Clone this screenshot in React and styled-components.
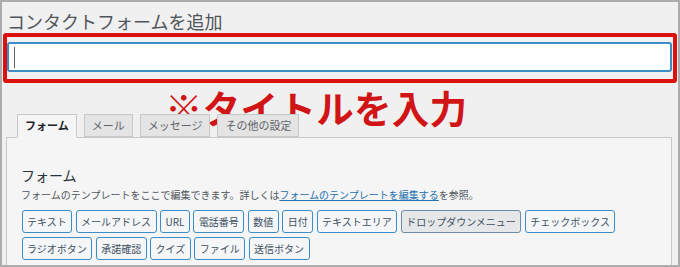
import React from "react";
import styled, { createGlobalStyle } from "styled-components";

const GlobalStyle = createGlobalStyle`
  body {
    margin: 0;
    background: #ffffff;
    font-family: "Noto Sans CJK JP", "Noto Sans", sans-serif;
  }
`;

const Frame = styled.div`
  position: relative;
  box-sizing: border-box;
  width: 680px;
  height: 267px;
  overflow: hidden;
  border: 2px solid #acacac;
  background: #f0f0f0;
  padding: 8px 0 0 0;
`;

const Title = styled.h1`
  margin: 0 0 10px 5px;
  font-size: 18px;
  line-height: 22px;
  font-weight: 400;
  color: #50555b;
`;

const TitleField = styled.div`
  box-sizing: border-box;
  display: flex;
  align-items: center;
  margin-left: 5px;
  width: 665px;
  height: 30px;
  padding-left: 5px;
  border: 2px solid #3b8dc5;
  border-radius: 3px;
  background: #ffffff;
`;

const Caret = styled.span`
  width: 1px;
  height: 21px;
  background: #666;
`;

const Highlight = styled.div`
  position: absolute;
  box-sizing: border-box;
  left: 1px;
  top: 31px;
  width: 674px;
  height: 50px;
  border: 4px solid #dd1010;
  border-radius: 3px;
  pointer-events: none;
`;

const Note = styled.div`
  position: absolute;
  left: 163px;
  top: 86px;
  font-size: 37.5px;
  line-height: 37px;
  letter-spacing: 0.3px;
  font-weight: 700;
  color: #d11416;
  white-space: nowrap;
`;

const Tabs = styled.div`
  display: flex;
  gap: 7px;
  margin: 42px 0 0 15px;
  position: relative;
  z-index: 1;
`;

const Tab = styled.div`
  box-sizing: border-box;
  height: ${({ $active }) => ($active ? "24px" : "23px")};
  padding: 0 7px;
  border: 1px solid #c8c8c8;
  border-bottom-color: ${({ $active }) => ($active ? "#f5f5f5" : "#c8c8c8")};
  background: ${({ $active }) => ($active ? "#f5f5f5" : "#e4e4e4")};
  color: ${({ $active }) => ($active ? "#1d2327" : "#5f6368")};
  font-size: 11px;
  line-height: 21px;
  font-weight: ${({ $active }) => ($active ? 700 : 400)};
  margin-bottom: ${({ $active }) => ($active ? "-1px" : "0")};
`;

const Panel = styled.div`
  box-sizing: border-box;
  margin-left: 4px;
  width: 666px;
  height: 140px;
  padding: 28px 14px 0 14px;
  border: 1px solid #c8c8c8;
  background: #f5f5f5;
`;

const PanelHeading = styled.h2`
  margin: 0 0 4px 0;
  font-size: 14px;
  line-height: 18px;
  font-weight: 400;
  color: #2c3338;
`;

const Description = styled.p`
  margin: 0 0 8px 0;
  font-size: 10px;
  line-height: 14px;
  color: #50575e;
`;

const Link = styled.a`
  color: #2271b1;
  text-decoration: underline;
`;

const ButtonRow = styled.div`
  display: flex;
  flex-wrap: wrap;
  column-gap: 3.4px;
  row-gap: 4px;
  margin-left: 0.5px;
`;

const TagButton = styled.span`
  box-sizing: border-box;
  height: 23px;
  padding: 0 4.5px;
  border: 1px solid ${({ $pressed }) => ($pressed ? "#6d8aa6" : "#3a8dc8")};
  border-radius: 3px;
  background: ${({ $pressed }) => ($pressed ? "#e6e7e8" : "#f4f6f7")};
  color: #3f5063;
  font-size: 10px;
  line-height: 21px;
  white-space: nowrap;
`;

const tabs = ["フォーム", "メール", "メッセージ", "その他の設定"];

const tags = [
  "テキスト",
  "メールアドレス",
  "URL",
  "電話番号",
  "数値",
  "日付",
  "テキストエリア",
  "ドロップダウンメニュー",
  "チェックボックス",
  "ラジオボタン",
  "承諾確認",
  "クイズ",
  "ファイル",
  "送信ボタン",
];

export default function App() {
  return (
    <>
      <GlobalStyle />
      <Frame>
        <Title>コンタクトフォームを追加</Title>
        <TitleField>
          <Caret />
        </TitleField>
        <Tabs>
          {tabs.map((t, i) => (
            <Tab key={t} $active={i === 0}>
              {t}
            </Tab>
          ))}
        </Tabs>
        <Panel>
          <PanelHeading>フォーム</PanelHeading>
          <Description>
            フォームのテンプレートをここで編集できます。詳しくは
            <Link href="#">フォームのテンプレートを編集する</Link>を参照。
          </Description>
          <ButtonRow>
            {tags.map((t) => (
              <TagButton key={t} $pressed={t === "ドロップダウンメニュー"}>
                {t}
              </TagButton>
            ))}
          </ButtonRow>
        </Panel>
        <Highlight />
        <Note>※タイトルを入力</Note>
      </Frame>
    </>
  );
}
